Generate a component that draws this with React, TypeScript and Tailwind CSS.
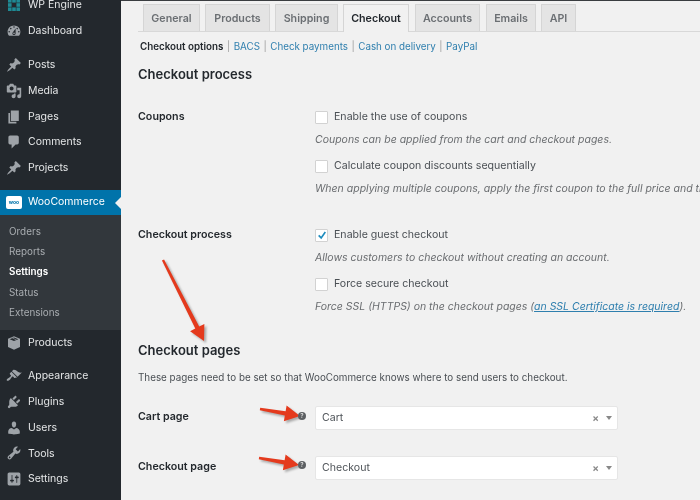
import { ReactNode } from "react";

const icons: Record<string, string> = {
  dashboard:
    "M3.76 16h12.48c1.1-1.37 1.76-3.11 1.76-5 0-4.42-3.58-8-8-8s-8 3.58-8 8c0 1.89.66 3.63 1.76 5zM10 4c.55 0 1 .45 1 1s-.45 1-1 1-1-.45-1-1 .45-1 1-1zM6 6c.55 0 1 .45 1 1s-.45 1-1 1-1-.45-1-1 .45-1 1-1zm8 0c.55 0 1 .45 1 1s-.45 1-1 1-1-.45-1-1 .45-1 1-1zm-5.37 5.55L12 7v6c0 1.1-.9 2-2 2s-2-.9-2-2c0-.57.24-1.08.63-1.45zM4 10c.55 0 1 .45 1 1s-.45 1-1 1-1-.45-1-1 .45-1 1-1zm12 0c.55 0 1 .45 1 1s-.45 1-1 1-1-.45-1-1 .45-1 1-1zm-5 3c0-.55-.45-1-1-1s-1 .45-1 1 .45 1 1 1 1-.45 1-1z",
  pin: "M10.44 3.02l1.82-1.82 6.36 6.35-1.83 1.82c-1.05-.68-2.48-.57-3.41.36l-.75.75c-.92.93-1.04 2.35-.35 3.41l-1.83 1.82-2.41-2.41-2.8 2.79c-.42.42-3.38 2.71-3.8 2.29s1.86-3.39 2.28-3.81l2.79-2.79L4.1 9.36l1.83-1.82c1.05.69 2.48.57 3.4-.36l.75-.75c.93-.92 1.05-2.35.36-3.41z",
  media:
    "M13 11V4c0-.55-.45-1-1-1h-1.67L9 1H5L3.67 3H2c-.55 0-1 .45-1 1v7c0 .55.45 1 1 1h10c.55 0 1-.45 1-1zM7 4.5c1.38 0 2.5 1.12 2.5 2.5S8.38 9.5 7 9.5 4.5 8.38 4.5 7 5.62 4.5 7 4.5zM14 6h5v10.5c0 1.38-1.12 2.5-2.5 2.5S14 17.88 14 16.5s1.12-2.5 2.5-2.5c.17 0 .34.02.5.05V9h-3V6zm-4 8.05V13h2v3.5c0 1.38-1.12 2.5-2.5 2.5S7 17.88 7 16.5 8.12 14 9.5 14c.17 0 .34.02.5.05z",
  pages: "M6 15V2h10v13H6zm-1 1h8v2H3V5h2v11z",
  comments:
    "M5 2h9c1.1 0 2 .9 2 2v7c0 1.1-.9 2-2 2h-2l-5 5v-5H5c-1.1 0-2-.9-2-2V4c0-1.1.9-2 2-2z",
  products:
    "M10 1.5l7.5 3.2v10.2L10 18.5l-7.5-3.6V4.7L10 1.5zM4.6 5.2L10 7.6l5.4-2.4L10 3 4.6 5.2zM7 3.8l5.6 2.5.9-.4L8 3.4l-1 .4z",
  appearance:
    "M14.48 11.06L7.41 3.99l1.5-1.5c.5-.56 2.3-.47 3.51.32 1.21.8 1.43 1.28 2.91 2.1 1.18.64 2.45 1.26 4.45.85zm-.71.71L6.7 4.7 4.93 6.47c-.39.39-.39 1.02 0 1.41l1.06 1.06c.39.39.39 1.03 0 1.42-.6.6-1.43 1.11-2.21 1.69-.35.26-.7.53-1.01.84C1.43 13.23.4 14.99 1.2 15.8c.8.8 2.57-.23 3.91-1.57.31-.31.58-.66.85-1.02.58-.78 1.09-1.61 1.69-2.21.39-.39 1.02-.39 1.41 0l1.06 1.06c.39.39 1.02.39 1.41 0z",
  plugins:
    "M13.11 4.36L9.87 7.6 8 5.73l3.24-3.24c.35-.34 1.05-.2 1.56.32.52.51.66 1.21.31 1.55zm-8 1.77l.91-1.12 9.01 9.01-1.19.84c-.71.71-2.63 1.16-3.82 1.16H6.14L4.9 17.26c-.59.59-1.54.59-2.12 0-.59-.58-.59-1.53 0-2.12l1.24-1.24v-3.88c0-1.13.4-3.19 1.09-3.89zm7.26 3.97l3.24-3.24c.34-.35 1.04-.21 1.55.31.52.51.66 1.21.31 1.55l-3.24 3.25z",
  users:
    "M10 9.25c-2.27 0-2.73-3.44-2.73-3.44C7 4.02 7.82 2 9.97 2c2.16 0 2.98 2.02 2.71 3.81 0 0-.41 3.44-2.68 3.44zm0 2.57L12.72 10c2.39 0 4.52 2.33 4.52 4.53v2.49s-3.65 1.13-7.24 1.13c-3.65 0-7.24-1.13-7.24-1.13v-2.49c0-2.25 1.94-4.48 4.47-4.48z",
  tools:
    "M16.68 9.77c-1.34 1.34-3.3 1.67-4.95.99l-5.41 6.52c-.99.99-2.59.99-3.58 0s-.99-2.59 0-3.57l6.52-5.42c-.68-1.65-.35-3.61.99-4.95 1.28-1.28 3.12-1.62 4.72-1.06l-2.89 2.89 2.82 2.82 2.86-2.87c.53 1.58.18 3.39-1.08 4.65zM3.81 16.21c.4.39 1.04.39 1.43 0 .4-.4.4-1.04 0-1.43-.39-.4-1.03-.4-1.43 0-.39.39-.39 1.03 0 1.43z",
  settings:
    "M18 16V4c0-1.1-.9-2-2-2H4c-1.1 0-2 .9-2 2v12c0 1.1.9 2 2 2h12c1.1 0 2-.9 2-2zM8 11h1c.55 0 1 .45 1 1s-.45 1-1 1H8v1.5c0 .28-.22.5-.5.5s-.5-.22-.5-.5V13H6c-.55 0-1-.45-1-1s.45-1 1-1h1V5.5c0-.28.22-.5.5-.5s.5.22.5.5V11zm5-2h-1c-.55 0-1-.45-1-1s.45-1 1-1h1V5.5c0-.28.22-.5.5-.5s.5.22.5.5V7h1c.55 0 1 .45 1 1s-.45 1-1 1h-1v5.5c0 .28-.22.5-.5.5s-.5-.22-.5-.5V9z",
};

function MenuRow({ icon, label }: { icon: string; label: string }) {
  return (
    <div className="flex h-[25.7px] items-center pl-[6px] text-[10.5px] text-[#e4e6e7]">
      <svg viewBox="0 0 20 20" className="mr-[6px] h-[16px] w-[16px] fill-[#9ea3a8]">
        <path d={icons[icon]} />
      </svg>
      {label}
    </div>
  );
}

function SubRow({ label, active = false }: { label: string; active?: boolean }) {
  return (
    <div className={`flex h-[20.4px] items-center pl-[9px] text-[9.9px] ${active ? "font-semibold text-white" : "text-[#a9adb1]"}`}>
      {label}
    </div>
  );
}

function Sidebar() {
  return (
    <aside className="h-[500px] w-[121px] shrink-0 overflow-hidden bg-[#23282d]">
      <div className="-mt-2">
        <div className="flex h-[25.7px] items-center pl-[7px] text-[10.5px] text-[#e4e6e7]">
          <svg viewBox="0 0 14 14" className="mr-[7px] h-[14px] w-[14px] fill-[#1f8a94]">
            <rect x="1" y="1" width="3.6" height="3.6" />
            <rect x="5.2" y="1" width="3.6" height="3.6" />
            <rect x="9.4" y="1" width="3.6" height="3.6" />
            <rect x="1" y="5.2" width="3.6" height="3.6" />
            <rect x="9.4" y="5.2" width="3.6" height="3.6" />
            <rect x="1" y="9.4" width="3.6" height="3.6" />
            <rect x="5.2" y="9.4" width="3.6" height="3.6" />
            <rect x="9.4" y="9.4" width="3.6" height="3.6" />
          </svg>
          WP Engine
        </div>
        <MenuRow icon="dashboard" label="Dashboard" />
        <div className="h-[9px]" />
        <MenuRow icon="pin" label="Posts" />
        <MenuRow icon="media" label="Media" />
        <MenuRow icon="pages" label="Pages" />
        <MenuRow icon="comments" label="Comments" />
        <MenuRow icon="pin" label="Projects" />
        <div className="h-[9px]" />
        <div className="relative flex h-[25px] items-center bg-[#0073aa] pl-[6px] text-[10.5px] text-white">
          <span className="mr-[6px] flex h-[13px] w-[16px] items-center justify-center rounded-[2px] bg-white text-[5px] font-bold leading-none text-[#0073aa]">
            woo
          </span>
          WooCommerce
          <span className="absolute right-0 top-[7px] h-0 w-0 border-y-[6px] border-r-[6px] border-y-transparent border-r-[#f1f1f1]" />
        </div>
        <div className="h-[115px] bg-[#32373c] pt-[6px]">
          <SubRow label="Orders" />
          <SubRow label="Reports" />
          <SubRow label="Settings" active />
          <SubRow label="Status" />
          <SubRow label="Extensions" />
        </div>
        <MenuRow icon="products" label="Products" />
        <div className="h-[8px]" />
        <MenuRow icon="appearance" label="Appearance" />
        <MenuRow icon="plugins" label="Plugins" />
        <MenuRow icon="users" label="Users" />
        <MenuRow icon="tools" label="Tools" />
        <MenuRow icon="settings" label="Settings" />
      </div>
    </aside>
  );
}

function Tab({ label, active = false, className }: { label: string; active?: boolean; className: string }) {
  return (
    <div
      className={`flex items-center justify-center border border-b-0 border-[#d5d5d5] pt-[2px] text-[10.7px] font-semibold ${className} ${
        active ? "relative top-px h-[28px] bg-[#f1f1f1] text-[#23282d]" : "h-[27px] bg-[#e4e4e4] text-[#6b6f73]"
      }`}
    >
      {label}
    </div>
  );
}

function Check({ label, checked = false }: { label: string; checked?: boolean }) {
  return (
    <div className="flex h-[14px] items-center text-[10.6px] text-[#4a4f54]">
      <span className="mr-[6px] flex h-[13px] w-[13px] items-center justify-center rounded-[1px] border border-[#d2d2d2] bg-white">
        {checked && (
          <svg viewBox="0 0 12 12" className="h-[10px] w-[10px] fill-none stroke-[#1e8cbe] stroke-[2]">
            <path d="M2 6.5 L5 9.5 L10 2.5" />
          </svg>
        )}
      </span>
      {label}
    </div>
  );
}

function Desc({ children }: { children: ReactNode }) {
  return <p className="mt-[9px] h-[14px] text-[10.5px] leading-[14px] italic text-[#6a6d70]">{children}</p>;
}

function Field({ label, value, className }: { label: string; value: string; className: string }) {
  return (
    <div className={`flex h-[24px] items-center ${className}`}>
      <div className="-mt-[2px] w-[177px] shrink-0 text-[10.7px] font-semibold text-[#23282d]">{label}</div>
      <div className="flex h-[24px] w-[303px] shrink-0 items-center rounded-[2px] border border-[#e6e6e6] bg-white pl-[6px] pr-[5px] text-[10.6px] text-[#50555a]">
        <span className="flex-1">{value}</span>
        <span className="mr-[7px] text-[10px] font-bold leading-none text-[#8a8a8a]">×</span>
        <span className="h-0 w-0 border-x-[3.5px] border-t-[4px] border-x-transparent border-t-[#888888]" />
      </div>
    </div>
  );
}

// tapered annotation arrow
function Arrow({ x1, y1, x2, y2 }: { x1: number; y1: number; x2: number; y2: number }) {
  const a = Math.atan2(y2 - y1, x2 - x1);
  const len = 15;
  const bx = x2 - Math.cos(a) * len;
  const by = y2 - Math.sin(a) * len;
  const nx = -Math.sin(a);
  const ny = Math.cos(a);
  const pts = [
    [x1 + nx * 1.2, y1 + ny * 1.2],
    [bx + nx * 2.2, by + ny * 2.2],
    [bx + nx * 8, by + ny * 8],
    [x2, y2],
    [bx - nx * 8, by - ny * 8],
    [bx - nx * 2.2, by - ny * 2.2],
    [x1 - nx * 1.2, y1 - ny * 1.2],
  ];
  return <polygon points={pts.map((p) => p.join(",")).join(" ")} fill="#e43a1d" />;
}

function Help({ className }: { className: string }) {
  return (
    <span className={`absolute z-10 flex h-[8px] w-[8px] items-center justify-center rounded-full bg-[#5c5f62] text-[6px] font-bold leading-none text-[#d8d8d8] ${className}`}>
      ?
    </span>
  );
}

function Separator() {
  return <span className="mx-[3.5px]">|</span>;
}

function Main() {
  return (
    <main className="relative h-[500px] flex-1 overflow-hidden whitespace-nowrap border-t border-[#3a3d40] bg-[#f1f1f1] pl-[17px]">
      <div className="flex h-[31px] items-end border-b border-[#d8d8d8] pl-[5px] pt-[4px]">
        <Tab label="General" className="mr-[5px] w-[57px]" />
        <Tab label="Products" className="mr-[5px] w-[65px]" />
        <Tab label="Shipping" className="mr-[5px] w-[63px]" />
        <Tab label="Checkout" active className="mr-[6px] w-[66px]" />
        <Tab label="Accounts" className="mr-[6px] w-[65px]" />
        <Tab label="Emails" className="mr-[5px] w-[50px]" />
        <Tab label="API" className="w-[35px]" />
      </div>

      <div className="mt-[8px] flex h-[14px] items-center pl-[2px] text-[9.8px] text-[#a0a0a0]">
        <span className="font-semibold text-[#23282d]">Checkout options</span>
        <Separator />
        <span className="text-[#2f7fae]">BACS</span>
        <Separator />
        <span className="text-[#2f7fae]">Check payments</span>
        <Separator />
        <span className="text-[#2f7fae]">Cash on delivery</span>
        <Separator />
        <span className="text-[#2f7fae]">PayPal</span>
      </div>

      <h2 className="mt-[12px] text-[13px] leading-[17px] font-semibold text-[#23282d]">Checkout process</h2>

      <div className="mt-[27px] flex">
        <div className="w-[177px] shrink-0 text-[10.7px] leading-[14px] font-semibold text-[#23282d]">Coupons</div>
        <div>
          <Check label="Enable the use of coupons" />
          <Desc>Coupons can be applied from the cart and checkout pages.</Desc>
          <div className="h-[12px]" />
          <Check label="Calculate coupon discounts sequentially" />
          <Desc>When applying multiple coupons, apply the first coupon to the full price and the second coupon to the discounted price.</Desc>
        </div>
      </div>

      <div className="mt-[32px] flex">
        <div className="w-[177px] shrink-0 text-[10.7px] leading-[14px] font-semibold text-[#23282d]">Checkout process</div>
        <div>
          <Check label="Enable guest checkout" checked />
          <Desc>Allows customers to checkout without creating an account.</Desc>
          <div className="h-[12px]" />
          <Check label="Force secure checkout" />
          <Desc>
            Force SSL (HTTPS) on the checkout pages (<span className="text-[#2f7fae] underline">an SSL Certificate is required</span>).
          </Desc>
        </div>
      </div>

      <h2 className="mt-[28px] text-[13px] leading-[17px] font-semibold text-[#23282d]">Checkout pages</h2>
      <p className="mt-[11px] h-[14px] text-[9.85px] leading-[14px] text-[#4a4f54]">
        These pages need to be set so that WooCommerce knows where to send users to checkout.
      </p>

      <Field label="Cart page" value="Cart" className="mt-[22px]" />
      <Field label="Checkout page" value="Checkout" className="mt-[26px]" />

      <Help className="left-[177px] top-[411px]" />
      <Help className="left-[177px] top-[460px]" />

      <svg
        className="pointer-events-none absolute left-0 top-0 h-[500px] w-[579px] drop-shadow-[2px_2px_1px_rgba(0,0,0,0.3)]"
        viewBox="121 0 579 500"
      >
        <Arrow x1={163} y1={259} x2={204} y2={340} />
        <Arrow x1={260} y1={408} x2={300} y2={415} />
        <Arrow x1={259} y1={457} x2={299} y2={464} />
      </svg>
    </main>
  );
}

export default function App() {
  return (
    <div className="flex h-[500px] w-[700px] overflow-hidden font-['Inter',sans-serif] blur-[0.4px]">
      <Sidebar />
      <Main />
    </div>
  );
}
